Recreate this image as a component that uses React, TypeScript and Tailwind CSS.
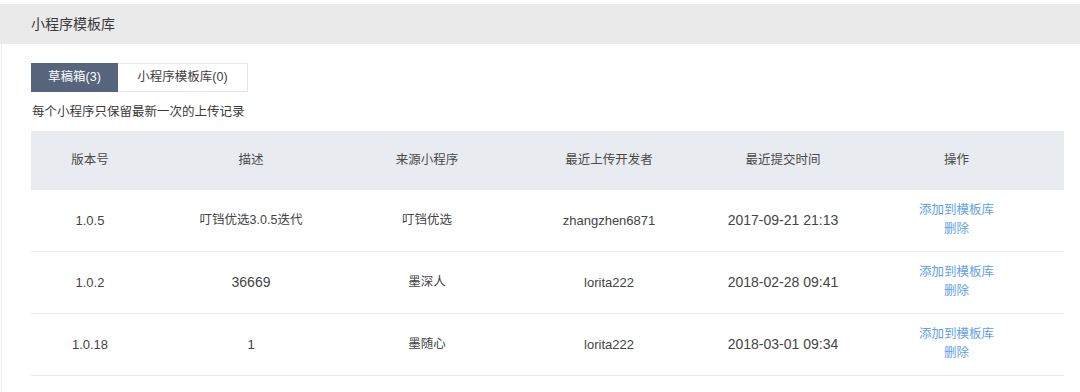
import React from "react";

const rows = [
  { v: "1.0.5", d: "叮铛优选3.0.5迭代", ds: "text-[12.5px]", s: "叮铛优选", u: "zhangzhen6871", t: "2017-09-21 21:13" },
  { v: "1.0.2", d: "36669", ds: "text-[14px]", s: "墨深人", u: "lorita222", t: "2018-02-28 09:41" },
  { v: "1.0.18", d: "1", ds: "text-[13px]", s: "墨随心", u: "lorita222", t: "2018-03-01 09:34" },
];

const cols = "grid grid-cols-[118px_204px_148px_216px_132px_215px]";

export default function App() {
  return (
    <div
      className="w-[1080px] h-[392px] bg-white overflow-hidden text-[#353535]"
      style={{ fontFamily: '"Liberation Sans", "Noto Sans CJK SC", sans-serif' }}
    >
      <div className="h-[4px]" />
      <div className="h-[40px] bg-[#eaeaea] flex items-center pl-[31px] text-[14px] text-[#3a3a3a]">
        小程序模板库
      </div>
      <div className="ml-[1px] border-l border-[#eeeeee] h-[348px] pl-[29px] pt-[19px]">
        <div className="flex h-[29px] text-[12.5px]">
          <div className="w-[87px] bg-[#56657b] text-white flex items-center justify-center">草稿箱(3)</div>
          <div className="w-[130px] border border-l-0 border-[#e6e6e6] flex items-center justify-center text-[#404040]">
            小程序模板库(0)
          </div>
        </div>
        <div className="mt-[11px] text-[12.5px] leading-[18px] ml-[1px] text-[#3a3a3a]">每个小程序只保留最新一次的上传记录</div>
        <div className="mt-[10px] w-[1033px]">
          <div className={`${cols} h-[59px] bg-[#e8ecf0] items-center text-center text-[12.5px] text-[#4a4a4a]`}>
            <div>版本号</div>
            <div>描述</div>
            <div>来源小程序</div>
            <div>最近上传开发者</div>
            <div>最近提交时间</div>
            <div>操作</div>
          </div>
          {rows.map((r, i) => (
            <div
              key={i}
              className={`${cols} h-[62px] border-b border-[#ebebeb] items-center text-center text-[13px] text-[#444444]`}
            >
              <div>{r.v}</div>
              <div className={r.ds}>{r.d}</div>
              <div className="text-[12.5px]">{r.s}</div>
              <div>{r.u}</div>
              <div className="text-[14px]">{r.t}</div>
              <div className="flex flex-col items-center text-[12.5px] leading-[19px] text-[#62a0ea] -mt-[2px]">
                <span>添加到模板库</span>
                <span>删除</span>
              </div>
            </div>
          ))}
        </div>
      </div>
    </div>
  );
}
